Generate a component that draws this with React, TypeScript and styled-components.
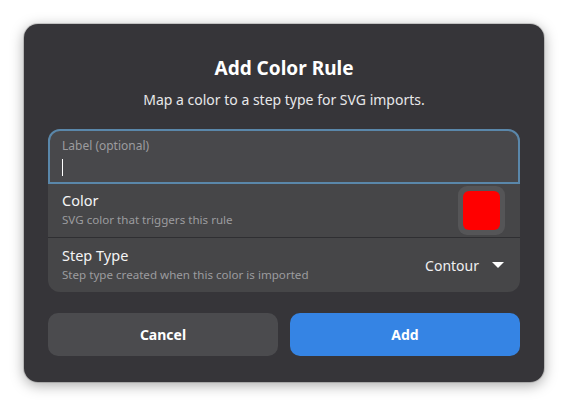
import React from "react";
import styled, { createGlobalStyle } from "styled-components";

const Global = createGlobalStyle`
  html, body { margin: 0; padding: 0; background: #ffffff; }
  body { font-family: "Noto Sans", "Open Sans", sans-serif; -webkit-font-smoothing: antialiased; }
`;

const Page = styled.div`
  width: 568px;
  height: 406px;
  padding: 24px;
  box-sizing: border-box;
`;

const Dialog = styled.div`
  width: 520px;
  height: 358px;
  box-sizing: border-box;
  background: #363539;
  border-radius: 14px;
  box-shadow: 0 3px 14px rgba(0, 0, 0, 0.35), 0 0 0 1px rgba(0, 0, 0, 0.15);
  padding: 32px 24px 25px;
  display: flex;
  flex-direction: column;
  color: #ffffff;
`;

const Title = styled.h1`
  margin: 0;
  font-size: 19px;
  line-height: 24px;
  font-weight: 700;
  text-align: center;
  color: #ffffff;
`;

const Subtitle = styled.p`
  margin: 10px 0 0;
  font-size: 14px;
  line-height: 20px;
  text-align: center;
  color: #e8e8ea;
`;

const Card = styled.div`
  margin-top: 19px;
  background: #464648;
  border-radius: 12px;
  display: flex;
  flex-direction: column;
`;

const Entry = styled.div`
  height: 55px;
  box-sizing: border-box;
  border: 2px solid #5a87aa;
  border-radius: 12px 12px 0 0;
  background: #48484b;
  padding: 6px 12px 0;
  display: flex;
  flex-direction: column;
`;

const EntryLabel = styled.span`
  font-size: 12px;
  line-height: 18px;
  color: #9c9c9f;
`;

const Caret = styled.span`
  display: block;
  width: 1px;
  height: 17px;
  margin-top: 4px;
  background: #ffffff;
`;

const Row = styled.div<{ $last?: boolean }>`
  height: 54px;
  box-sizing: border-box;
  padding: 0 15px 0 14px;
  display: flex;
  align-items: center;
  justify-content: space-between;
  border-bottom: ${(p) => (p.$last ? "none" : "1px solid #2f2f32")};
`;

const RowText = styled.div`
  display: flex;
  flex-direction: column;
  gap: 2px;
  padding-bottom: 3px;
`;

const RowTitle = styled.span`
  font-size: 14.5px;
  line-height: 20px;
  color: #f4f4f5;
`;

const RowSub = styled.span`
  font-size: 11.6px;
  line-height: 16px;
  color: #9c9c9f;
`;

const Swatch = styled.button`
  width: 47px;
  height: 49px;
  padding: 5px;
  border: none;
  border-radius: 9px;
  background: #555557;
  display: flex;
  align-items: stretch;
  justify-content: stretch;
  box-sizing: border-box;
`;

const SwatchFill = styled.span<{ $color: string }>`
  flex: 1;
  border-radius: 6px;
  background: ${(p) => p.$color};
`;

const Dropdown = styled.div`
  display: flex;
  align-items: center;
  gap: 13px;
  font-size: 14px;
  color: #f0f0f1;
  padding-right: 1px;
`;

const Buttons = styled.div`
  margin-top: 21px;
  display: grid;
  grid-template-columns: 1fr 1fr;
  gap: 12px;
`;

const Button = styled.button<{ $primary?: boolean }>`
  height: 43px;
  border: none;
  border-radius: 10px;
  background: ${(p) => (p.$primary ? "#3584e4" : "#4b4b4e")};
  color: #ffffff;
  font-family: "Noto Sans", "Open Sans", sans-serif;
  font-size: 14px;
  font-weight: 700;
`;

export default function App() {
  return (
    <>
      <Global />
      <Page>
        <Dialog>
          <Title>Add Color Rule</Title>
          <Subtitle>Map a color to a step type for SVG imports.</Subtitle>
          <Card>
            <Entry>
              <EntryLabel>Label (optional)</EntryLabel>
              <Caret />
            </Entry>
            <Row>
              <RowText>
                <RowTitle>Color</RowTitle>
                <RowSub>SVG color that triggers this rule</RowSub>
              </RowText>
              <Swatch aria-label="Color">
                <SwatchFill $color="#ff0000" />
              </Swatch>
            </Row>
            <Row $last>
              <RowText>
                <RowTitle>Step Type</RowTitle>
                <RowSub>Step type created when this color is imported</RowSub>
              </RowText>
              <Dropdown>
                <span>Contour</span>
                <svg width="12" height="6" viewBox="0 0 12 6">
                  <path d="M0 0 H12 L6 6 Z" fill="#ffffff" />
                </svg>
              </Dropdown>
            </Row>
          </Card>
          <Buttons>
            <Button>Cancel</Button>
            <Button $primary>Add</Button>
          </Buttons>
        </Dialog>
      </Page>
    </>
  );
}
